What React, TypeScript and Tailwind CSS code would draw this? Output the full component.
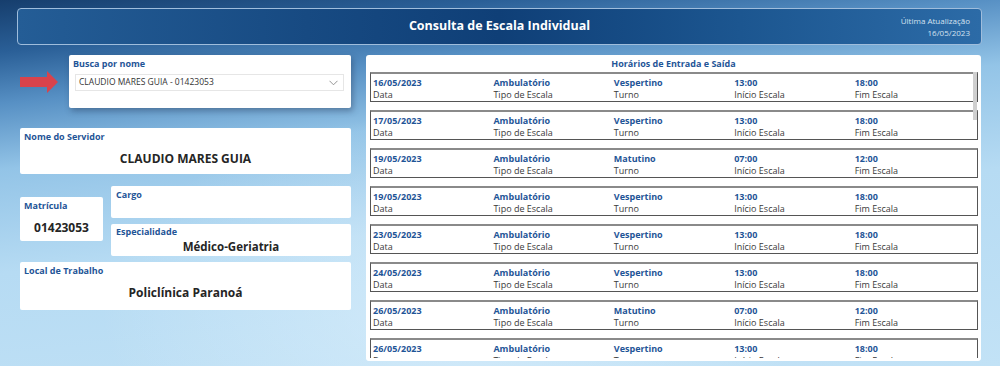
import React from "react";

const rows = [
  ["16/05/2023", "Ambulatório", "Vespertino", "13:00", "18:00"],
  ["17/05/2023", "Ambulatório", "Vespertino", "13:00", "18:00"],
  ["19/05/2023", "Ambulatório", "Matutino", "07:00", "12:00"],
  ["19/05/2023", "Ambulatório", "Vespertino", "13:00", "18:00"],
  ["23/05/2023", "Ambulatório", "Vespertino", "13:00", "18:00"],
  ["24/05/2023", "Ambulatório", "Vespertino", "13:00", "18:00"],
  ["26/05/2023", "Ambulatório", "Matutino", "07:00", "12:00"],
  ["26/05/2023", "Ambulatório", "Vespertino", "13:00", "18:00"],
];
const labels = ["Data", "Tipo de Escala", "Turno", "Início Escala", "Fim Escala"];

const font = { fontFamily: '"Open Sans", "Noto Sans", sans-serif' };

function Label({ children }: { children: React.ReactNode }) {
  return <div className="text-[9px] font-bold leading-[12px] text-[#1f5597]">{children}</div>;
}

export default function App() {
  return (
    <div
      style={font}
      className="relative w-[1000px] h-[366px] overflow-hidden bg-[linear-gradient(174deg,#163e6d_0%,#2a5f97_11%,#5790c4_22%,#93c4e7_36%,#b6dbf3_58%,#c2e2f6_100%)]"
    >
      <div className="absolute inset-0 bg-[radial-gradient(ellipse_at_45%_85%,rgba(232,246,255,0.5)_0%,rgba(232,246,255,0)_45%)]" />
      <div className="relative flex flex-col pt-[8px]">
        {/* Header */}
        <div className="ml-[17px] w-[965px] h-[37px] rounded-[4px] border border-[#9fbddc] bg-[linear-gradient(90deg,#245d96_0%,#174a82_30%,#0f3f77_50%,#1c5690_75%,#2c6ba7_100%)] relative flex items-center justify-center">
          <div className="text-white font-bold text-[12.5px] leading-none">Consulta de Escala Individual</div>
          <div className="absolute right-[11px] top-[6px] text-right text-[#d5e2f0] text-[8px] leading-[12px]">
            <div>Última Atualização</div>
            <div>16/05/2023</div>
          </div>
        </div>

        <div className="flex mt-[10px]">
          {/* Left column */}
          <div className="ml-[20px] w-[331px] flex flex-col">
            <div className="flex items-start">
              <svg width="38" height="22" viewBox="0 0 38 22" className="mt-[16px]">
                <polygon points="0,6 27,6 27,0 38,11 27,22 27,16 0,16" fill="#d8434c" />
              </svg>
              <div className="ml-[11px] w-[282px] h-[53px] bg-white rounded-[2px] shadow-[2px_3px_6px_rgba(40,60,90,0.45)] px-[4px] pt-[3px]">
                <Label>Busca por nome</Label>
                <div className="mt-[4px] ml-[2px] w-[269px] h-[17px] border border-[#e6e6e6] flex items-center justify-between px-[3px]">
                  <span className="text-[8.5px] text-[#333] leading-none">CLAUDIO MARES GUIA - 01423053</span>
                  <svg width="9" height="6" viewBox="0 0 9 6" className="mr-[2px]">
                    <polyline points="0.5,0.8 4.5,4.8 8.5,0.8" fill="none" stroke="#888" strokeWidth="0.9" />
                  </svg>
                </div>
              </div>
            </div>

            <div className="mt-[20px] h-[46px] bg-white rounded-[2px] px-[4px] pt-[3px]">
              <Label>Nome do Servidor</Label>
              <div className="text-center text-[12px] font-bold text-[#252525] mt-[10px] leading-none">CLAUDIO MARES GUIA</div>
            </div>

            <div className="flex mt-[12px]">
              <div className="w-[83px] mt-[11px] h-[44px] bg-white rounded-[2px] px-[4px] pt-[3px]">
                <Label>Matrícula</Label>
                <div className="text-center text-[12px] font-bold text-[#252525] mt-[10px] leading-none">01423053</div>
              </div>
              <div className="ml-[8px] w-[240px] flex flex-col">
                <div className="h-[32px] bg-white rounded-[2px] px-[5px] pt-[3px]">
                  <Label>Cargo</Label>
                </div>
                <div className="mt-[6px] h-[32px] bg-white rounded-[2px] px-[5px] pt-[2px]">
                  <Label>Especialidade</Label>
                  <div className="text-center text-[11.5px] font-bold text-[#252525] leading-[14px] mt-[2px]">Médico-Geriatria</div>
                </div>
              </div>
            </div>

            <div className="mt-[6px] h-[48px] bg-white rounded-[2px] px-[4px] pt-[3px]">
              <Label>Local de Trabalho</Label>
              <div className="text-center text-[12px] font-bold text-[#252525] mt-[10px] leading-none">Policlínica Paranoá</div>
            </div>
          </div>

          {/* Right panel */}
          <div className="ml-[15px] w-[615px] h-[306px] bg-white rounded-[3px] relative">
            <div className="h-[17px] flex items-center justify-center text-[9px] font-bold text-[#1f5597]">
              Horários de Entrada e Saída
            </div>
            <div className="ml-[4px] w-[608px] h-[286px] overflow-hidden flex flex-col gap-[8px]">
              {rows.map((r, i) => (
                <div key={i} className="shrink-0 h-[30px] border border-[#555] border-t-[2px] border-t-[#8a8a8a] flex px-[2px] pt-[3px]">
                  {r.map((v, j) => (
                    <div key={j} className="w-[120.5px] flex flex-col">
                      <div className="text-[9px] font-bold text-[#1f5597] leading-[12px]">{v}</div>
                      <div className="text-[9px] text-[#3a3a3a] leading-[12px]">{labels[j]}</div>
                    </div>
                  ))}
                </div>
              ))}
            </div>
            <div className="absolute left-[607px] top-[17px] w-[4px] h-[48px] bg-[#cfcfcf]" />
          </div>
        </div>
      </div>
    </div>
  );
}
